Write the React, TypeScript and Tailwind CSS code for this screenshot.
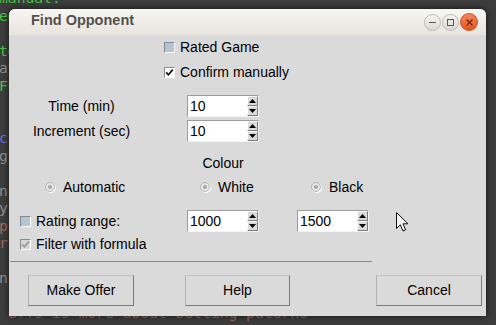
import React from "react";

const termLines: { t: string; c: string }[] = [
  { t: "manual:", c: "#47c247" },
  { t: "ed", c: "#47c247" },
  { t: "", c: "#8a8a8a" },
  { t: "te", c: "#47c247" },
  { t: "at", c: "#8f8f8f" },
  { t: "Fo", c: "#47c247" },
  { t: "", c: "#8a8a8a" },
  { t: "", c: "#8a8a8a" },
  { t: "c", c: "#6a6ae6" },
  { t: "g", c: "#8f8f8f" },
  { t: "", c: "#8a8a8a" },
  { t: "nc", c: "#8f8f8f" },
  { t: "y", c: "#8f8f8f" },
  { t: "p", c: "#a2685c" },
  { t: "r", c: "#a2685c" },
  { t: "", c: "#8a8a8a" },
  { t: "nc", c: "#8f8f8f" },
  { t: "", c: "#8a8a8a" },
  { t: " uffs is more about betting paterns", c: "#a2685c" },
];

function ArrowBtn({ up }: { up?: boolean }) {
  return (
    <div className="flex h-[10px] w-[11px] items-center justify-center border border-t-white border-l-white border-b-[#7c7c7c] border-r-[#7c7c7c] bg-[#dadada]">
      <svg width="7" height="4" viewBox="0 0 7 4">
        {up ? <polygon points="0,4 7,4 3.5,0" fill="#000" /> : <polygon points="0,0 7,0 3.5,4" fill="#000" />}
      </svg>
    </div>
  );
}

function Spin({ v }: { v: string }) {
  return (
    <div className="flex h-[22px] w-[72px] border border-t-[#9c9c9c] border-l-[#9c9c9c] border-b-[#f4f4f4] border-r-[#f4f4f4] bg-[#dadada]">
      <div className="flex-1 bg-white pl-[2px] text-[14px] leading-[20px] text-black">{v}</div>
      <div className="flex w-[11px] flex-col">
        <ArrowBtn up />
        <ArrowBtn />
      </div>
    </div>
  );
}

function Check({ kind }: { kind: "off" | "on" | "dis" }) {
  const bg = kind === "off" ? "bg-[#b5c4d4]" : kind === "on" ? "bg-white" : "bg-[#d6d6d6]";
  return (
    <div className={`flex h-[11px] w-[11px] shrink-0 items-center justify-center border border-t-[#8a8a8a] border-l-[#8a8a8a] border-b-white border-r-white ${bg}`}>
      {kind !== "off" && (
        <svg width="9" height="9" viewBox="0 0 9 9">
          <path d="M1.2 4.4 L3.4 6.8 L7.8 1.6" fill="none" stroke={kind === "on" ? "#111" : "#9a9a9a"} strokeWidth="1.7" />
        </svg>
      )}
    </div>
  );
}

function Radio() {
  return (
    <div className="flex h-[10px] w-[10px] shrink-0 items-center justify-center rounded-full border border-[#b4b4b4] bg-[#e6e6e6] shadow-[1px_1px_0_#ffffff]">
      <div className="h-[4px] w-[4px] rounded-full bg-[#a6a6a6]" />
    </div>
  );
}

function Btn({ label, w, ml }: { label: string; w: string; ml: string }) {
  return (
    <div className={`flex h-[31px] items-center justify-center border border-t-[#c4c4c4] border-l-[#b0b0b0] border-b-[#7a7a7a] border-r-[#7a7a7a] bg-[#dadada] text-[14px] text-black ${w} ${ml}`}>
      {label}
    </div>
  );
}

export default function App() {
  return (
    <div className="relative h-[325px] w-[496px] overflow-hidden bg-[#3c3c3c]">
      <pre
        className="ml-[-1px] mt-[-11px] text-[14.67px] leading-[17.5px]"
        style={{ fontFamily: '"DejaVu Sans Mono", monospace' }}
      >
        {termLines.map((l, i) => (
          <div key={i} style={{ color: l.c }} className="h-[17.5px]">
            {l.t}
          </div>
        ))}
      </pre>

      {/* window */}
      <div
        className="absolute left-[9px] top-[9px] flex h-[307px] w-[477px] flex-col overflow-hidden rounded-t-[6px] bg-[#dadada] shadow-[0_0_6px_rgba(0,0,0,0.7)]"
        style={{ fontFamily: '"Liberation Sans", Arial, sans-serif' }}
      >
        {/* title bar */}
        <div className="flex h-[26px] shrink-0 items-center bg-gradient-to-b from-[#f7f6f4] to-[#e8e4de] pl-[22px] pr-[8px]">
          <div className="mt-[-2px] text-[14.5px] font-bold text-[#55504a]">Find Opponent</div>
          <div className="ml-auto flex items-center gap-[1px]">
            <div className="flex h-[17px] w-[17px] items-center justify-center rounded-full border border-[#bdb9b3] bg-gradient-to-b from-[#f6f5f3] to-[#dcd9d4]">
              <div className="h-[1px] w-[7px] bg-[#555]" />
            </div>
            <div className="flex h-[17px] w-[17px] items-center justify-center rounded-full border border-[#bdb9b3] bg-gradient-to-b from-[#f6f5f3] to-[#dcd9d4]">
              <div className="h-[7px] w-[7px] border border-[#555]" />
            </div>
            <div className="flex h-[18px] w-[18px] items-center justify-center rounded-full border border-[#c9501f] bg-gradient-to-b from-[#f7855a] to-[#e65118]">
              <svg width="7" height="7" viewBox="0 0 7 7">
                <path d="M0.5 0.5 L6.5 6.5 M6.5 0.5 L0.5 6.5" stroke="#5b2a18" strokeWidth="1.1" />
              </svg>
            </div>
          </div>
        </div>

        {/* body */}
        <div className="flex flex-1 flex-col text-[14px] text-black">
          <div className="flex h-[24px] items-center pl-[155px]">
            <Check kind="off" />
            <span className="ml-[5px]">Rated Game</span>
          </div>
          <div className="flex h-[26px] items-center pl-[155px]">
            <Check kind="on" />
            <span className="ml-[5px]">Confirm manually</span>
          </div>

          <div className="mt-[10px] flex h-[22px] items-center pl-[11px]">
            <div className="w-[123px] text-center">Time (min)</div>
            <div className="ml-[44px]">
              <Spin v="10" />
            </div>
          </div>
          <div className="mt-[3px] flex h-[22px] items-center pl-[11px]">
            <div className="w-[123px] text-center">Increment (sec)</div>
            <div className="ml-[44px]">
              <Spin v="10" />
            </div>
          </div>

          <div className="mt-[10px] flex h-[22px] items-center pl-[178px]">
            <div className="w-[72px] text-center">Colour</div>
          </div>

          <div className="mt-[2px] flex h-[22px] items-center pl-[36px]">
            <div className="flex w-[155px] items-center">
              <Radio />
              <span className="ml-[8px]">Automatic</span>
            </div>
            <div className="flex w-[111px] items-center">
              <Radio />
              <span className="ml-[8px]">White</span>
            </div>
            <div className="flex items-center">
              <Radio />
              <span className="ml-[8px]">Black</span>
            </div>
          </div>

          <div className="mt-[12px] flex h-[22px] items-center pl-[11px]">
            <div className="flex w-[167px] items-center">
              <Check kind="off" />
              <span className="ml-[5px]">Rating range:</span>
            </div>
            <Spin v="1000" />
            <div className="ml-[38px]">
              <Spin v="1500" />
            </div>
          </div>

          <div className="mt-[2px] flex h-[21px] items-center pl-[11px]">
            <Check kind="dis" />
            <span className="ml-[5px]">Filter with formula</span>
          </div>

          <div className="ml-[1px] mt-[6px] h-[1px] w-[362px] bg-[#8a8a8a]" />

          <div className="mt-[13px] flex">
            <Btn label="Make Offer" w="w-[106px]" ml="ml-[19px]" />
            <Btn label="Help" w="w-[105px]" ml="ml-[51px]" />
            <Btn label="Cancel" w="w-[106px]" ml="ml-[86px]" />
          </div>
        </div>
      </div>

      {/* mouse cursor */}
      <svg className="absolute left-[396px] top-[212px]" width="14" height="21" viewBox="0 0 14 21">
        <path d="M0.5 0.5 L0.5 16.5 L4.3 12.8 L7 19 L9.6 17.9 L7 11.8 L12 11.8 Z" fill="#f2f2f2" stroke="#111" strokeWidth="1" strokeLinejoin="round" />
      </svg>
    </div>
  );
}
